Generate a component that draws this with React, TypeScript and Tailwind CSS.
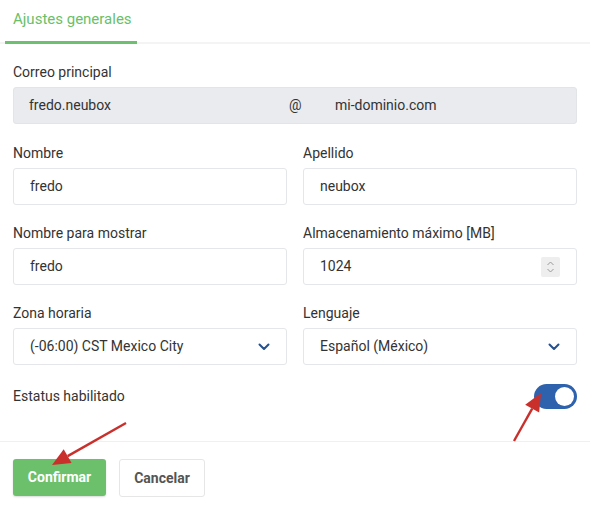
import React, { useState } from 'react';

const inputCls =
  'h-[37px] w-full rounded-[3px] border border-[#e4e6e9] bg-white px-4 text-[14px] text-[#333] flex items-center';

const Field = ({ label, children }: { label: string; children: React.ReactNode }) => (
  <div className="flex flex-col">
    <label className="mb-[5px] h-[20px] text-[14px] leading-[20px] text-[#333]">{label}</label>
    {children}
  </div>
);

const Chevron = () => (
  <svg width="12" height="8" viewBox="0 0 12 8" className="text-[#24528f]">
    <path d="M1.5 1.5 6 6l4.5-4.5" fill="none" stroke="currentColor" strokeWidth="2" strokeLinecap="round" strokeLinejoin="round" />
  </svg>
);

const Arrow = ({ x1, y1, x2, y2 }: { x1: number; y1: number; x2: number; y2: number }) => {
  const a = Math.atan2(y2 - y1, x2 - x1);
  const len = 18;
  const w = 8;
  const bx = x2 - Math.cos(a) * len;
  const by = y2 - Math.sin(a) * len;
  const p1 = `${bx + Math.sin(a) * w},${by - Math.cos(a) * w}`;
  const p2 = `${bx - Math.sin(a) * w},${by + Math.cos(a) * w}`;
  return (
    <g>
      <line x1={x1} y1={y1} x2={bx} y2={by} stroke="#c9302c" strokeWidth="2.4" />
      <polygon points={`${x2},${y2} ${p1} ${p2}`} fill="#c9302c" />
    </g>
  );
};

export default function App() {
  const [enabled, setEnabled] = useState(true);

  return (
    <div className="relative h-[508px] w-[610px] overflow-hidden bg-white font-['Roboto',sans-serif] text-[#333]">
      {/* Tabs */}
      <div className="mr-[20px] flex h-[44px] border-b-[2px] border-[#f4f4f4]">
        <div className="ml-[5px] -mb-[2px] flex w-[132px] items-start border-b-[3px] border-[#6cc070] pl-[8px] pt-[8px] text-[15px] text-[#6abf69]">
          Ajustes generales
        </div>
      </div>

      <div className="flex flex-col px-[13px] pr-[33px] pt-[18px]">
        <Field label="Correo principal">
          <div className="flex h-[37px] items-center rounded-[3px] border border-[#e2e4e7] bg-[#e9ebee] text-[14px] text-[#333]">
            <span className="w-[275px] pl-[15px]">fredo.neubox</span>
            <span className="w-[46px]">@</span>
            <span>mi-dominio.com</span>
          </div>
        </Field>

        <div className="mt-[19px] grid grid-cols-2 gap-x-[16px] gap-y-[18px]">
          <Field label="Nombre">
            <div className={inputCls}>fredo</div>
          </Field>
          <Field label="Apellido">
            <div className={inputCls}>neubox</div>
          </Field>
          <Field label="Nombre para mostrar">
            <div className={inputCls}>fredo</div>
          </Field>
          <Field label="Almacenamiento máximo [MB]">
            <div className={`${inputCls} justify-between pr-[16px]`}>
              <span>1024</span>
              <span className="flex h-[20px] w-[19px] items-center justify-center rounded-[2px] bg-[#eeeeee]">
                <svg width="9" height="14" viewBox="0 0 9 14">
                  <path d="M1.5 5 4.5 2l3 3M1.5 9l3 3 3-3" fill="none" stroke="#9a9a9a" strokeWidth="1" />
                </svg>
              </span>
            </div>
          </Field>
          <Field label="Zona horaria">
            <div className={`${inputCls} justify-between pr-[16px]`}>
              <span>(-06:00) CST Mexico City</span>
              <Chevron />
            </div>
          </Field>
          <Field label="Lenguaje">
            <div className={`${inputCls} justify-between pr-[16px]`}>
              <span>Español (México)</span>
              <Chevron />
            </div>
          </Field>
        </div>

        <div className="mt-[19px] flex h-[25px] items-center justify-between">
          <span className="text-[14px] leading-[20px] -mt-[1px]">Estatus habilitado</span>
          <button
            onClick={() => setEnabled(!enabled)}
            className={`flex h-[25px] w-[43px] items-center rounded-full px-[3px] ${
              enabled ? 'justify-end bg-[#2f62ad]' : 'justify-start bg-[#ccc]'
            }`}
          >
            <span className="h-[19px] w-[19px] rounded-full bg-white" />
          </button>
        </div>
      </div>

      <div className="mr-[20px] mt-[32px] border-t border-[#f0f0f0]" />

      <div className="flex gap-[13px] px-[13px] pt-[17px]">
        <button className="h-[37px] w-[93px] rounded-[3px] bg-[#6cc06c] text-[14px] font-bold text-white shadow-[0_1px_2px_rgba(0,0,0,0.15)]">
          Confirmar
        </button>
        <button className="h-[38px] w-[86px] rounded-[3px] border border-[#e6e6e6] bg-white text-[14px] font-bold text-[#555]">
          Cancelar
        </button>
      </div>

      {/* annotation arrows */}
      <svg className="pointer-events-none absolute left-0 top-0" width="610" height="508">
        <Arrow x1={126} y1={423} x2={52} y2={465} />
        <Arrow x1={514} y1={441} x2={541} y2={393} />
      </svg>
    </div>
  );
}
